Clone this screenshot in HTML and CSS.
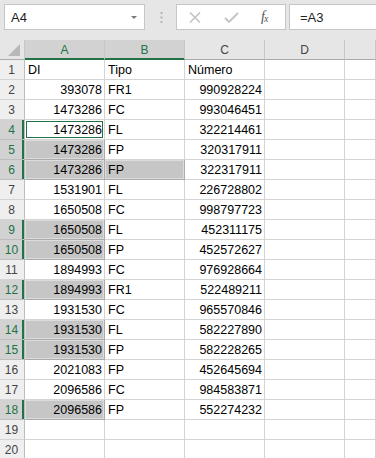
FILE: index.html
```html
<!DOCTYPE html>
<html lang="es">
<head>
  <meta charset="UTF-8">
  <meta name="viewport" content="width=device-width, initial-scale=1.0">
  <title>Hoja de cálculo</title>
  <link rel="stylesheet" href="styles.css">
</head>
<body>
  <div class="formula-bar">
    <div class="name-box">
      <span>A4</span>
      <span class="caret"></span>
    </div>
    <div class="grip">
      <svg width="3" height="11" viewBox="0 0 3 11"><rect x="0.5" y="0" width="2" height="2" fill="#b4b4b4"/><rect x="0.5" y="4.5" width="2" height="2" fill="#b4b4b4"/><rect x="0.5" y="9" width="2" height="2" fill="#b4b4b4"/></svg>
    </div>
    <div class="fx-buttons">
      <svg class="btn-cancel" width="12" height="11" viewBox="0 0 12 11"><path d="M1 0.5 L11 10.5 M11 0.5 L1 10.5" stroke="#c3c3c3" stroke-width="1.6" fill="none"/></svg>
      <svg class="btn-enter" width="15" height="11" viewBox="0 0 15 11"><path d="M1 6 L5 10 L14 1" stroke="#c3c3c3" stroke-width="1.8" fill="none"/></svg>
      <span class="fx">f<sub>x</sub></span>
    </div>
    <div class="formula-input">=A3</div>
  </div>

  <div class="sheet">
    <div class="row head">
      <div class="corner"><span class="tri"></span></div>
      <div class="col-h picked">A</div>
      <div class="col-h picked">B</div>
      <div class="col-h">C</div>
      <div class="col-h">D</div>
      <div class="col-h"></div>
    </div>

    <div class="row"><div class="row-h">1</div><div class="cell">DI</div><div class="cell">Tipo</div><div class="cell">Número</div><div class="cell"></div><div class="cell"></div></div>
    <div class="row"><div class="row-h">2</div><div class="cell num">393078</div><div class="cell">FR1</div><div class="cell num">990928224</div><div class="cell"></div><div class="cell"></div></div>
    <div class="row"><div class="row-h">3</div><div class="cell num">1473286</div><div class="cell">FC</div><div class="cell num">993046451</div><div class="cell"></div><div class="cell"></div></div>
    <div class="row"><div class="row-h picked">4</div><div class="cell num active">1473286</div><div class="cell">FL</div><div class="cell num">322214461</div><div class="cell"></div><div class="cell"></div></div>
    <div class="row"><div class="row-h picked">5</div><div class="cell num sel">1473286</div><div class="cell">FP</div><div class="cell num">320317911</div><div class="cell"></div><div class="cell"></div></div>
    <div class="row"><div class="row-h picked">6</div><div class="cell num sel">1473286</div><div class="cell sel">FP</div><div class="cell num">322317911</div><div class="cell"></div><div class="cell"></div></div>
    <div class="row"><div class="row-h">7</div><div class="cell num">1531901</div><div class="cell">FL</div><div class="cell num">226728802</div><div class="cell"></div><div class="cell"></div></div>
    <div class="row"><div class="row-h">8</div><div class="cell num">1650508</div><div class="cell">FC</div><div class="cell num">998797723</div><div class="cell"></div><div class="cell"></div></div>
    <div class="row"><div class="row-h picked">9</div><div class="cell num sel">1650508</div><div class="cell">FL</div><div class="cell num">452311175</div><div class="cell"></div><div class="cell"></div></div>
    <div class="row"><div class="row-h picked">10</div><div class="cell num sel">1650508</div><div class="cell">FP</div><div class="cell num">452572627</div><div class="cell"></div><div class="cell"></div></div>
    <div class="row"><div class="row-h">11</div><div class="cell num">1894993</div><div class="cell">FC</div><div class="cell num">976928664</div><div class="cell"></div><div class="cell"></div></div>
    <div class="row"><div class="row-h picked">12</div><div class="cell num sel">1894993</div><div class="cell">FR1</div><div class="cell num">522489211</div><div class="cell"></div><div class="cell"></div></div>
    <div class="row"><div class="row-h">13</div><div class="cell num">1931530</div><div class="cell">FC</div><div class="cell num">965570846</div><div class="cell"></div><div class="cell"></div></div>
    <div class="row"><div class="row-h picked">14</div><div class="cell num sel">1931530</div><div class="cell">FL</div><div class="cell num">582227890</div><div class="cell"></div><div class="cell"></div></div>
    <div class="row"><div class="row-h picked">15</div><div class="cell num sel">1931530</div><div class="cell">FP</div><div class="cell num">582228265</div><div class="cell"></div><div class="cell"></div></div>
    <div class="row"><div class="row-h">16</div><div class="cell num">2021083</div><div class="cell">FP</div><div class="cell num">452645694</div><div class="cell"></div><div class="cell"></div></div>
    <div class="row"><div class="row-h">17</div><div class="cell num">2096586</div><div class="cell">FC</div><div class="cell num">984583871</div><div class="cell"></div><div class="cell"></div></div>
    <div class="row"><div class="row-h picked">18</div><div class="cell num sel">2096586</div><div class="cell">FP</div><div class="cell num">552274232</div><div class="cell"></div><div class="cell"></div></div>
    <div class="row"><div class="row-h">19</div><div class="cell"></div><div class="cell"></div><div class="cell"></div><div class="cell"></div><div class="cell"></div></div>
    <div class="row"><div class="row-h">20</div><div class="cell"></div><div class="cell"></div><div class="cell"></div><div class="cell"></div><div class="cell"></div></div>
  </div>
</body>
</html>
```

FILE: styles.css
```css
body {
  margin: 0;
  width: 376px;
  overflow: hidden;
  font-family: 'Liberation Sans', Arial, sans-serif;
  background: #ffffff;
  color: #000000;
}

.formula-bar {
  display: flex;
  align-items: flex-start;
  height: 40px;
  padding: 4px 0 0 4px;
  box-sizing: border-box;
  background: #e6e6e6;
}

.name-box,
.fx-buttons,
.formula-input {
  height: 26px;
  box-sizing: border-box;
  background: #ffffff;
  border: 1px solid #c6c6c6;
  display: flex;
  align-items: center;
  font-size: 13px;
  color: #222222;
}

.name-box {
  width: 141px;
  padding: 0 6px 0 6px;
  justify-content: space-between;
}

.caret {
  width: 0;
  height: 0;
  border-left: 3px solid transparent;
  border-right: 3px solid transparent;
  border-top: 3px solid #7a7a7a;
  margin-right: 1px;
}

.grip {
  width: 31px;
  height: 26px;
  display: flex;
  align-items: center;
  justify-content: center;
  padding-left: 1px;
  box-sizing: border-box;
}

.fx-buttons {
  width: 110px;
  padding-left: 12px;
  gap: 0;
}

.btn-cancel {
  margin-right: 23px;
}

.btn-enter {
  margin-right: 22px;
}

.fx {
  font-family: 'Liberation Serif', serif;
  font-style: italic;
  font-size: 14px;
  color: #555555;
  letter-spacing: -1px;
}

.fx sub {
  font-size: 10px;
  vertical-align: -1px;
}

.formula-input {
  flex: 1;
  margin-left: 3px;
  padding-left: 10px;
  border-right: none;
}

.sheet {
  font-size: 12.5px;
}

.row {
  display: grid;
  grid-template-columns: 25px repeat(4, 80px) 31px;
  height: 20px;
}

.cell,
.row-h,
.col-h,
.corner {
  box-sizing: border-box;
  height: 20px;
  border-right: 1px solid #d4d4d4;
  border-bottom: 1px solid #d4d4d4;
  padding: 2px 3px 0 3px;
  line-height: 17px;
  white-space: nowrap;
  overflow: hidden;
  position: relative;
}

.cell.num {
  text-align: right;
  padding-right: 2px;
}

.cell.sel {
  background: #c6c6c6;
  border-color: #ababab;
  box-shadow: inset 0 0 0 1px #dcdcdc;
}

.cell.active {
  box-shadow: inset 0 0 0 1px #ffffff, inset 0 0 0 2px #217346;
}

.row-h {
  background: #efefef;
  border-right-color: #bdbdbd;
  text-align: center;
  color: #444444;
  font-size: 12px;
  padding-left: 0;
  padding-right: 1px;
}

.row-h.picked {
  background: #d2d2d2;
  color: #217346;
  box-shadow: inset -2px 0 0 #217346;
  border-bottom-color: #bdbdbd;
}

.head .col-h,
.head .corner {
  background: #e6e6e6;
  border-right-color: #c6c6c6;
  border-bottom-color: #ababab;
  text-align: center;
  color: #444444;
  font-size: 12px;
}

.head .col-h.picked {
  background: #d2d2d2;
  color: #217346;
  border-bottom-color: #217346;
  box-shadow: inset 0 -1px 0 #217346;
}

.tri {
  position: absolute;
  right: 4px;
  bottom: 3px;
  width: 0;
  height: 0;
  border-left: 12px solid transparent;
  border-bottom: 12px solid #b8b8b8;
}
```
